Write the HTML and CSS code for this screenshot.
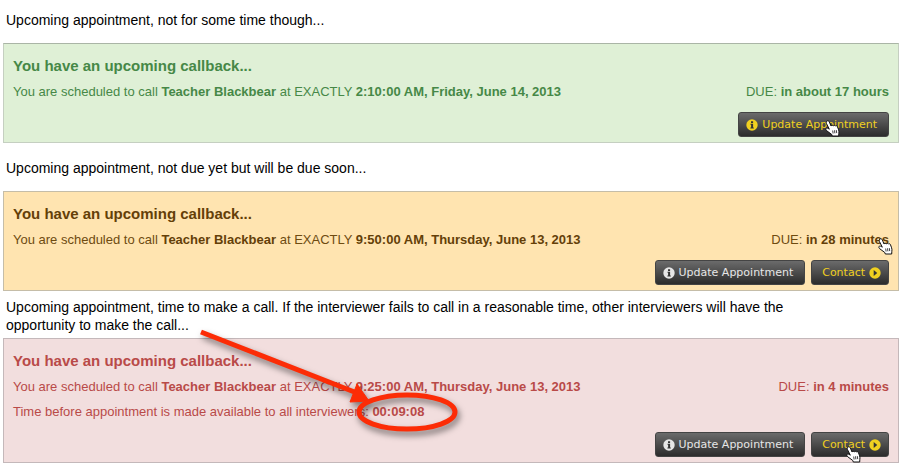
FILE: index.html
```html
<!DOCTYPE html>
<html lang="en">
<head>
  <meta charset="UTF-8" />
  <meta name="viewport" content="width=device-width, initial-scale=1.0"/>
  <title>Upcoming callbacks</title>
  <link rel="stylesheet" href="styles.css">
</head>
<body>
  <!-- shared icons -->
  <svg class="sprite" aria-hidden="true">
    <symbol id="icon-info" viewBox="0 0 12 12">
      <circle cx="6" cy="6" r="5.7" fill="currentColor"/>
      <path d="M4.5 4.800h2.600v3.700h.7v1H4.400v-1h.7V5.800h-.6zM5 2.200h2.100v1.800H5z" fill="#333"/>
    </symbol>
    <symbol id="icon-next" viewBox="0 0 12 12">
      <circle cx="6" cy="6" r="5.7" fill="currentColor"/>
      <path d="M4.7 3.1L8.2 6 4.7 8.9z" fill="#333"/>
    </symbol>
    <symbol id="icon-hand" viewBox="0 0 15 17">
      <path d="M1.600 1.300C2.500.4 3.800.7 4.300 1.800L6 6c.6-.8 1.700-.8 2.200-.1.600-.8 1.700-.7 2.200.1.700-.6 1.700-.3 2 .5l1.200 3.300c.4 1.300.5 2.600.2 3.900l-.1 2.300H7.300l-.5-1.500-5-3.700c-1-.9-1.200-1.900-.6-2.500.7-.5 1.600-.2 3.100.9L1.400 3.400C1 2.400 1.100 1.800 1.600 1.300z" fill="#fff" stroke="#111" stroke-width="1"/>
      <path d="M7.700 10.500l.4 3M9.500 10.300l.4 3M11.300 10.100l.4 3" stroke="#111" stroke-width=".8" fill="none"/>
    </symbol>
  </svg>

  <p class="caption">Upcoming appointment, not for some time though...</p>
  <section class="callback later">
    <h2>You have an upcoming callback...</h2>
    <div class="details">
      <p>You are scheduled to call <strong>Teacher Blackbear</strong> at EXACTLY <strong>2:10:00 AM, Friday, June 14, 2013</strong></p>
      <p>DUE: <strong>in about 17 hours</strong></p>
    </div>
    <div class="actions">
      <button type="button" class="btn active">
        <svg class="icon"><use href="#icon-info"/></svg>
        Update Appointment
        <svg class="hand on-update"><use href="#icon-hand"/></svg>
      </button>
    </div>
  </section>

  <p class="caption">Upcoming appointment, not due yet but will be due soon...</p>
  <section class="callback soon">
    <h2>You have an upcoming callback...</h2>
    <div class="details">
      <p>You are scheduled to call <strong>Teacher Blackbear</strong> at EXACTLY <strong>9:50:00 AM, Thursday, June 13, 2013</strong></p>
      <p class="due">DUE: <strong>in 28 minutes</strong>
        <svg class="hand on-due"><use href="#icon-hand"/></svg>
      </p>
    </div>
    <div class="actions">
      <button type="button" class="btn">
        <svg class="icon"><use href="#icon-info"/></svg>
        Update Appointment
      </button>
      <button type="button" class="btn contact active">
        Contact
        <svg class="icon"><use href="#icon-next"/></svg>
      </button>
    </div>
  </section>

  <p class="caption long">Upcoming appointment, time to make a call. If the interviewer fails to call in a reasonable time, other interviewers will have the opportunity to make the call...</p>
  <section class="callback now">
    <h2>You have an upcoming callback...</h2>
    <div class="details">
      <p>You are scheduled to call <strong>Teacher Blackbear</strong> at EXACTLY <strong>9:25:00 AM, Thursday, June 13, 2013</strong></p>
      <p>DUE: <strong>in 4 minutes</strong></p>
    </div>
    <p class="countdown">Time before appointment is made available to all interviewers: <strong>00:09:08</strong></p>
    <div class="actions">
      <button type="button" class="btn">
        <svg class="icon"><use href="#icon-info"/></svg>
        Update Appointment
      </button>
      <button type="button" class="btn contact active">
        Contact
        <svg class="icon"><use href="#icon-next"/></svg>
        <svg class="hand on-contact"><use href="#icon-hand"/></svg>
      </button>
    </div>
    <!-- arrow and ring around the countdown -->
    <svg class="marker" viewBox="0 0 270 120" aria-hidden="true">
      <path d="M5 11L161 72" stroke="#fc2c06" stroke-width="5" fill="none"/>
      <path d="M161 63L173 80L154 81z" fill="#fc2c06" stroke="#fc2c06"/>
      <ellipse cx="211" cy="91" rx="48" ry="17" stroke="#fc2c06" stroke-width="5" fill="none"/>
    </svg>
  </section>
</body>
</html>
```

FILE: styles.css
```css
body {
  font-family: "Liberation Sans", Arial, sans-serif;
  background-color: #fff;
  margin: 0;
  padding: 11px 1px 4px 3px;
}
p, h2 {
  margin: 0;
}
.sprite {
  display: none;
}
.caption {
  font-size: 14px;
  line-height: 18px;
  color: #000;
  margin: 0 0 14px;
  padding-left: 3px;
}
.callback + .caption {
  margin-top: 16px;
}
.callback + .caption.long {
  max-width: 810px;
  margin: 7px 0 4px;
}

.callback {
  position: relative;
  border: 1px solid #bbb;
  padding: 11px 9px 5px;
  font-size: 13px;
  line-height: 20px;
}
.callback h2 {
  font-size: 15px;
  line-height: 22px;
  margin-bottom: 5px;
}
.later {
  background-color: #dff0d6;
  border-color: #aab5a6 #c5cfc1 #c5cfc1;
  color: #468847;
}
.soon {
  background-color: #ffe4b0;
  border-color: #c5bda8;
  color: #6e4b10;
}
.soon h2, .soon strong {
  color: #643f08;
}
.now {
  background-color: #f2dede;
  border-color: #c4b8ba;
  color: #b94a48;
}
.details {
  display: flex;
  justify-content: space-between;
}
.due {
  position: relative;
}
.countdown {
  margin-top: 5px;
}

.actions {
  display: flex;
  justify-content: flex-end;
  gap: 6px;
  margin-top: 10px;
}
.btn {
  position: relative;
  display: flex;
  align-items: center;
  gap: 4px;
  height: 25px;
  padding: 0 11px 0 7px;
  border: 1px solid #444;
  border-radius: 3px;
  background: linear-gradient(#6b6b6b, #2c2c2c);
  color: #e6e6e6;
  font-family: "DejaVu Sans", Verdana, sans-serif;
  font-size: 11px;
  cursor: pointer;
}
.btn.contact {
  padding: 0 7px 0 10px;
}
.btn.active {
  color: #f0d020;
}
.icon {
  width: 12px;
  height: 12px;
}

/* mouse pointers and marker lie over the panels */
.hand {
  position: absolute;
  width: 15px;
  height: 17px;
}
.on-update {
  left: 86px;
  top: 7px;
}
.on-due {
  right: -4px;
  top: 8px;
}
.on-contact {
  left: 34px;
  top: 13px;
}
.marker {
  position: absolute;
  left: 192px;
  top: -18px;
  width: 270px;
  height: 120px;
  filter: drop-shadow(2px 4px 3px rgba(0, 0, 0, 0.5));
  pointer-events: none;
}
```
